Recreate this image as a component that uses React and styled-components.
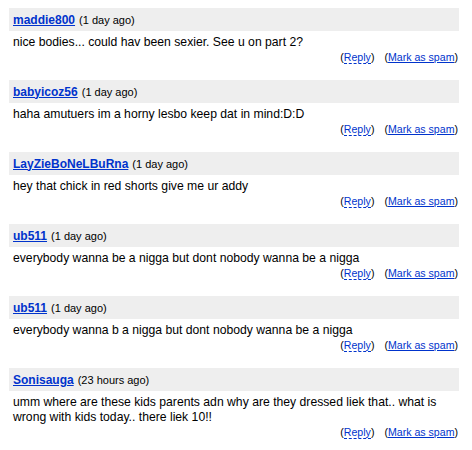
import React from "react";
import styled, { createGlobalStyle } from "styled-components";

const Global = createGlobalStyle`
  html, body { margin: 0; padding: 0; background: #fff; }
  body { font-family: "Liberation Sans", Arial, sans-serif; color: #000; }
`;

const List = styled.div`
  width: 450px;
  padding: 8px 0 0 9px;
  display: flex;
  flex-direction: column;
`;

const Comment = styled.div`
  display: flex;
  flex-direction: column;
  margin-bottom: 16px;
`;

const Header = styled.div`
  height: 23px;
  background: #eeeeee;
  display: flex;
  align-items: center;
  padding: 0 4px;
  font-size: 11px;
  line-height: 14px;
  color: #000;
`;

const User = styled.a`
  font-size: 12px;
  font-weight: bold;
  color: #0033cc;
  text-decoration: underline;
  margin-right: 4px;
  cursor: pointer;
`;

const Body = styled.div`
  font-size: 12.2px;
  line-height: 15px;
  padding: 4px 4px 0 4px;
`;

const Actions = styled.div`
  display: flex;
  justify-content: flex-end;
  gap: 10px;
  font-size: 10.6px;
  line-height: 14px;
  height: 14px;
  padding-right: 1px;
`;

const Action = styled.span`
  color: #000;
`;

const Link = styled.a`
  color: #0033cc;
  cursor: pointer;
  text-decoration: ${(p) => (p.$dashed ? "none" : "underline")};
  border-bottom: ${(p) => (p.$dashed ? "1px dashed #0033cc" : "none")};
`;

const comments = [
  { user: "maddie800", time: "1 day ago", text: "nice bodies... could hav been sexier. See u on part 2?" },
  { user: "babyicoz56", time: "1 day ago", text: "haha amutuers im a horny lesbo keep dat in mind:D:D" },
  { user: "LayZieBoNeLBuRna", time: "1 day ago", text: "hey that chick in red shorts give me ur addy" },
  { user: "ub511", time: "1 day ago", text: "everybody wanna be a nigga but dont nobody wanna be a nigga" },
  { user: "ub511", time: "1 day ago", text: "everybody wanna b a nigga but dont nobody wanna be a nigga" },
  { user: "Sonisauga", time: "23 hours ago", text: "umm where are these kids parents adn why are they dressed liek that.. what is wrong with kids today.. there liek 10!!" },
];

export default function App() {
  return (
    <>
      <Global />
      <List>
        {comments.map((c, i) => (
          <Comment key={i}>
            <Header>
              <User>{c.user}</User>
              <span>({c.time})</span>
            </Header>
            <Body>{c.text}</Body>
            <Actions>
              <Action>(<Link $dashed>Reply</Link>)</Action>
              <Action>(<Link>Mark as spam</Link>)</Action>
            </Actions>
          </Comment>
        ))}
      </List>
    </>
  );
}
